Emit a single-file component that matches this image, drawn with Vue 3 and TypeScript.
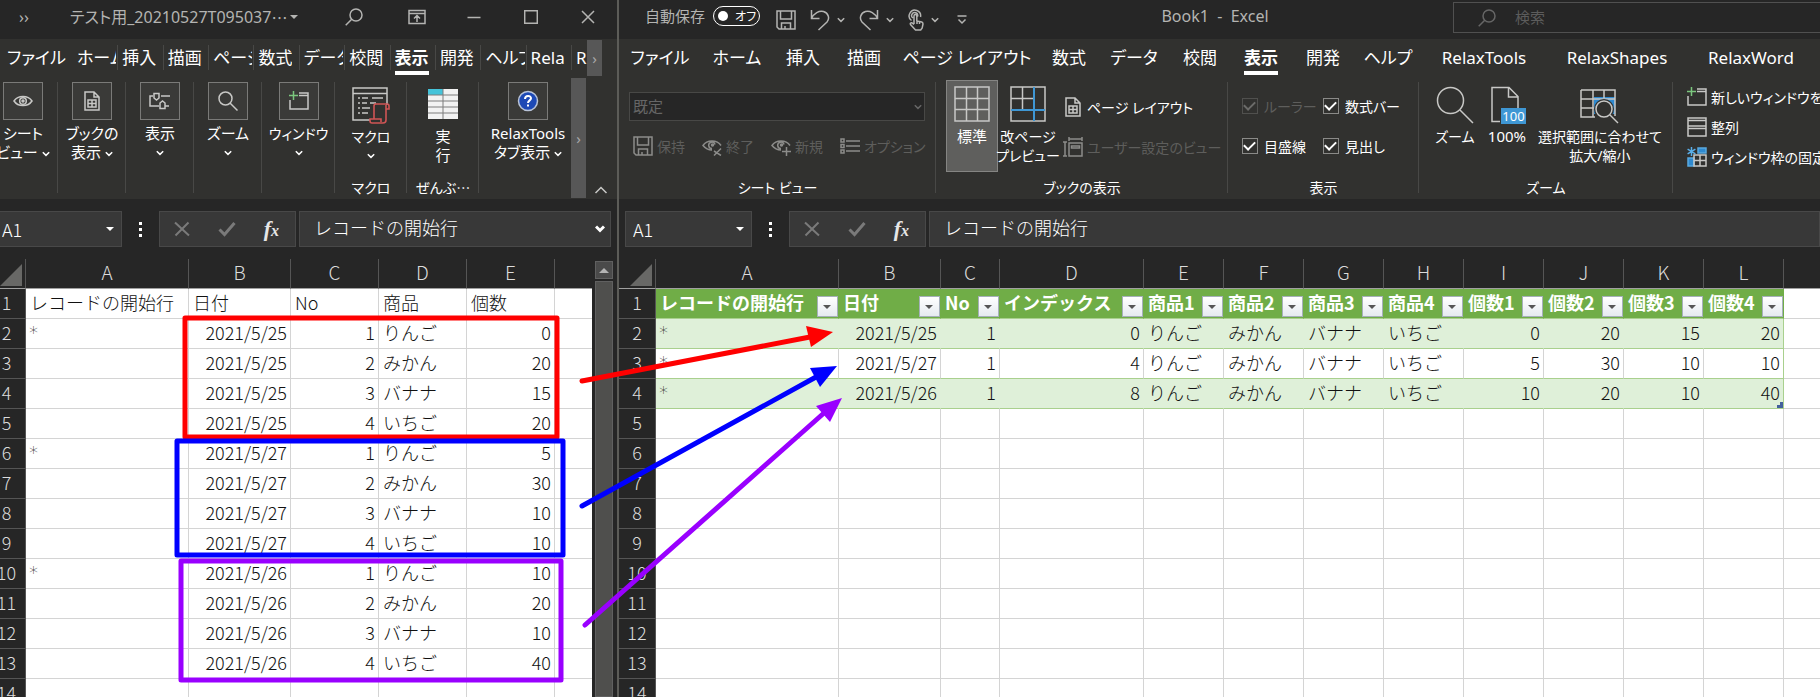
<script setup lang="ts">
interface Cell {
  text: string
  num?: boolean
}

const leftTabs: string[] = ['ホーム', '挿入', '描画', 'ページ', '数式', 'データ', '校閲', '表示', '開発', 'ヘルプ', 'Rela']
const rightTabs: string[] = ['ファイル', 'ホーム', '挿入', '描画', 'ページ レイアウト', '数式', 'データ', '校閲', '表示', '開発', 'ヘルプ', 'RelaxTools', 'RelaxShapes', 'RelaxWord']

const leftColumns = ['A', 'B', 'C', 'D', 'E', '']
const rightColumns = ['A', 'B', 'C', 'D', 'E', 'F', 'G', 'H', 'I', 'J', 'K', 'L', '']

const text = (value: string): Cell => ({ text: value })
const num = (value: string | number): Cell => ({ text: String(value), num: true })

const fruits = ['りんご', 'みかん', 'バナナ', 'いちご']
const records = [
  { date: '2021/5/25', counts: [0, 20, 15, 20] },
  { date: '2021/5/27', counts: [5, 30, 10, 10] },
  { date: '2021/5/26', counts: [10, 20, 10, 40] },
]

const leftRows: Cell[][] = [
  ['レコードの開始行', '日付', 'No', '商品', '個数', ''].map(text),
  ...records.flatMap((record) =>
    record.counts.map((count, i) => [
      text(i === 0 ? '*' : ''),
      num(record.date),
      num(i + 1),
      text(fruits[i]),
      num(count),
      text(''),
    ]),
  ),
  Array.from({ length: 6 }, () => text('')),
]

const tableHeads = ['レコードの開始行', '日付', 'No', 'インデックス', '商品1', '商品2', '商品3', '商品4', '個数1', '個数2', '個数3', '個数4']
const tableRows: Cell[][] = records.map((record, i) => [
  text('*'),
  num(record.date),
  num(1),
  num(i * 4),
  ...fruits.map(text),
  ...record.counts.map(num),
])
const emptyRows = [5, 6, 7, 8, 9, 10, 11, 12, 13, 14]
</script>

<template>
  <div class="desktop" lang="ja">
    <svg class="defs" aria-hidden="true">
      <symbol id="i-search" viewBox="0 0 18 18"><circle cx="11" cy="7" r="6" /><path d="M6.7 11.3 0.7 17.3" /></symbol>
      <symbol id="i-chev" viewBox="0 0 8 8"><path d="M.8 2.2 4 5.4 7.2 2.2" /></symbol>
      <symbol id="i-save" viewBox="0 0 20 20"><path d="M1 1h18v18H3l-2-2zM4.500 1v8h11V1M5.500 19v-6h9v6M9 19v-3" /></symbol>
      <symbol id="i-eye" viewBox="0 0 20 20"><path d="M1 10c4-6 14-6 18 0-4 6-14 6-18 0z" /><circle cx="10" cy="10" r="3.300" /><circle cx="10" cy="10" r="1" fill="currentColor" /></symbol>
      <symbol id="i-eyex" viewBox="0 0 20 20"><path d="M10 14C6 14 3 12 1 9.500c4-6 14-6 18 0M12 15l7 4.500M12 19.500l7-7M10 12.500a3.200 3.200 0 1 1 3-4" /><circle cx="10.500" cy="9" r="1" fill="currentColor" /></symbol>
      <symbol id="i-eyeplus" viewBox="0 0 20 20"><path d="M10 14C6 14 3 12 1 9.500c4-6 14-6 18 0M15.500 11v9M11 15.500h9M10 12.500a3.200 3.200 0 1 1 3-4" /><circle cx="10.500" cy="9" r="1" fill="currentColor" /></symbol>
      <symbol id="i-page" viewBox="0 0 16 20"><path d="M1 1h9l5 5v13H1zM10 1v5h5M4 9h8v7H4zM8 9v7M4 12.500h8" /></symbol>
      <symbol id="i-newwin" viewBox="0 0 20 20"><path d="M10 2h9v16H1V9M10 4.500h9" /><path d="M4.500 0v9M0 4.500h9" stroke="#7bc67e" /></symbol>
    </svg>

    <section class="window window-left">
      <header class="titlebar">
        <span class="more">››</span>
        <button class="doc-name">テスト用_20210527T095037<span class="cjk">…</span><i class="caret"></i></button>
        <span class="spacer"></span>
        <button class="winbtn winbtn-search" aria-label="検索"><svg width="18" height="18"><use href="#i-search" /></svg></button>
        <button class="winbtn" aria-label="リボンの表示オプション"><svg width="18" height="16" viewBox="0 0 18 16"><path d="M1 1.500h16v13H1zM1 4.500h16M9 13V6.500M6 9.500l3-3 3 3" /></svg></button>
        <button class="winbtn" aria-label="最小化"><svg width="14" height="14" viewBox="0 0 14 14"><path d="M.5 7.500h13" /></svg></button>
        <button class="winbtn" aria-label="最大化"><svg width="14" height="14" viewBox="0 0 14 14"><path d="M.7.7h12.600v12.600H.7z" /></svg></button>
        <button class="winbtn" aria-label="閉じる"><svg width="14" height="14" viewBox="0 0 14 14"><path d="M1 1l12 12M13 1 1 13" /></svg></button>
      </header>

      <nav class="tabs tabs-left">
        <button class="tab file"><span>ファイル</span></button>
        <button v-for="tab in leftTabs" :key="tab" class="tab slot" :class="{ active: tab === '表示' }"><span>{{ tab }}</span></button>
        <button class="tab tail"><span>R</span></button>
        <button class="scroll tabs-scroll" aria-label="次のタブ">›</button>
      </nav>

      <div class="ribbon ribbon-left">
        <div class="lgroup g-sheet">
          <button class="boxed"><span class="iconbox"><svg width="20" height="20"><use href="#i-eye" /></svg></span>シート<span class="nw">ビュー <svg class="chev"><use href="#i-chev" /></svg></span></button>
        </div>
        <div class="lgroup g-std">
          <button class="boxed"><span class="iconbox"><svg width="16" height="20"><use href="#i-page" /></svg></span>ブックの<span class="nw">表示 <svg class="chev"><use href="#i-chev" /></svg></span></button>
        </div>
        <div class="lgroup g-std">
          <button class="boxed"><span class="iconbox"><svg width="22" height="18" viewBox="0 0 22 18"><path d="M4 4H1v10h9M5 1.500h5V6L7.500 8 5 6zM12 4h9M16 14v2.500h-5V11l2.500-2 2.500 2v3h4" /></svg></span>表示<svg class="chev"><use href="#i-chev" /></svg></button>
        </div>
        <div class="lgroup g-std">
          <button class="boxed"><span class="iconbox"><svg width="20" height="20" viewBox="0 0 20 20"><circle cx="7.500" cy="7.500" r="6.500" /><path d="m12 12 7.500 7.500" /></svg></span>ズーム<svg class="chev"><use href="#i-chev" /></svg></button>
        </div>
        <div class="lgroup g-win">
          <button class="boxed compact"><span class="iconbox"><svg width="20" height="20"><use href="#i-newwin" /></svg></span>ウィンドウ<svg class="chev"><use href="#i-chev" /></svg></button>
        </div>
        <div class="lgroup g-macro">
          <button class="boxed tall compact">
            <svg width="38" height="38" viewBox="0 0 38 38"><path d="M18 33H1V1h34v17M1 6.500h34M6 11h2M10 11h6M20 11h11M6 16h2M10 16h5M18 16h6M6 21h2M10 21h8M6 26h2M10 26h6" /><path d="M22 17h13a2 2 0 0 1 2 2v3h-3M34 18v15a3 3 0 0 1-3 3H20a2 2 0 0 1-2-2v-2h11v3M22 32V19a2 2 0 0 1 2-2" stroke="#d05555" stroke-width="1.600" /></svg>
            マクロ<svg class="chev"><use href="#i-chev" /></svg>
          </button>
          <span class="caption">マクロ</span>
        </div>
        <div class="lgroup g-macro">
          <button class="boxed tall">
            <svg width="32" height="38" viewBox="0 0 32 38"><path d="M1 2h30v30H1z" fill="#f2f2f2" stroke="none" /><path d="M1 2h15v6H1z" fill="#45c3d9" stroke="none" /><path d="M16 2v30M1 8h30M1 14h30M1 20h30M1 26h30" stroke="#7d7d7d" stroke-width="1" /></svg>
            <span>実</span><span>行</span>
          </button>
          <span class="caption">ぜんぶ<span class="cjk">…</span></span>
        </div>
        <div class="lgroup g-relax">
          <button class="boxed"><span class="iconbox"><svg width="22" height="22" viewBox="0 0 22 22"><circle cx="11" cy="11" r="9.500" fill="#1d49b5" stroke="#b9c4d8" stroke-width="1.500" /><path d="M8 9c0-4 6-4 6-.7 0 2-3 2.200-3 4.700M11 14.500v2" stroke="#fff" stroke-width="2" /></svg></span>RelaxTools<span class="nw">タブ表示 <svg class="chev"><use href="#i-chev" /></svg></span></button>
        </div>
        <button class="scroll ribbon-scroll" aria-label="リボンを右へスクロール">›</button>
        <button class="collapse" aria-label="リボンを折りたたむ"><svg width="14" height="8" viewBox="0 0 14 8"><path d="M1.500 7 7 1.500 12.500 7" /></svg></button>
      </div>

      <div class="formula-row formula-row-left">
        <label class="namebox"><input value="A1" aria-label="名前ボックス" /><i class="caret"></i></label>
        <span class="dots"><i></i><i></i><i></i></span>
        <div class="fx-tools">
          <button aria-label="キャンセル"><svg width="16" height="16" viewBox="0 0 16 16"><path d="M1 1.500 15 14.500M14.500 1.500 1.500 14.500" stroke-width="2" /></svg></button>
          <button aria-label="入力"><svg width="18" height="16" viewBox="0 0 18 16"><path d="m1.500 8.500 5 5L16.500 2" stroke-width="3" /></svg></button>
          <button class="fx" aria-label="関数の挿入">f<sub>x</sub></button>
        </div>
        <label class="formula"><input value="レコードの開始行" aria-label="数式バー" /><svg class="expand" width="10" height="8" viewBox="0 0 10 8"><path d="m1 1.500 4 4 4-4" /></svg></label>
      </div>

      <div class="sheet-area">
        <div class="sheet">
          <table class="grid grid-left">
            <colgroup><col class="w-idx-l" /><col class="w163" /><col class="w102" /><col class="w88" /><col class="w88" /><col class="w88" /><col /></colgroup>
            <thead>
              <tr><th class="corner"><i></i></th><th v-for="(c, i) in leftColumns" :key="i">{{ c }}</th></tr>
            </thead>
            <tbody>
              <tr v-for="(row, r) in leftRows" :key="r">
                <th>{{ r + 1 }}</th>
                <td v-for="(cell, c) in row" :key="c" :class="{ num: cell.num, star: cell.text === '*' }">{{ cell.text }}</td>
              </tr>
            </tbody>
          </table>
        </div>
        <div class="vscroll">
          <button aria-label="上へスクロール"><i></i></button>
          <div class="thumb"></div>
        </div>
      </div>
    </section>

    <section class="window window-right">
      <header class="titlebar title-right">
        <label class="autosave">自動保存 <button class="toggle" role="switch" aria-checked="false"><i></i>オフ</button></label>
        <button class="qa qa-save" aria-label="上書き保存"><svg width="20" height="20"><use href="#i-save" /></svg></button>
        <button class="qa" aria-label="元に戻す"><svg width="20" height="22" viewBox="0 0 20 22"><path d="M1.500 1v8.500h8M1.500 9.500C4 4 9 1.500 13.500 2.500c5 1.500 6.500 7 3.500 10.500L8.500 21" /></svg><svg class="chev"><use href="#i-chev" /></svg></button>
        <button class="qa" aria-label="やり直し"><svg width="20" height="22" viewBox="0 0 20 22"><path d="M18.500 1v8.500h-8M18.500 9.500C16 4 11 1.500 6.500 2.500 1.500 4 0 9.500 3 13l8.500 8" /></svg><svg class="chev"><use href="#i-chev" /></svg></button>
        <button class="qa" aria-label="タッチ/マウス モード"><svg width="16" height="22" viewBox="0 0 16 22"><path d="M3.500 11.500A5.700 5.700 0 1 1 12.500 8M5 9a3 3 0 1 1 4.500-1.500M6 15V7a1.400 1.400 0 0 1 2.800 0v5l5 1c1 .3 1.200 1 1.200 2l-.8 4-1.500 2H7.500L2.500 15.500c-.7-1.300.6-2.200 1.700-1.500L6 15.500M9 12v3M11.500 12.500V15" /></svg><svg class="chev"><use href="#i-chev" /></svg></button>
        <button class="qa qa-menu" aria-label="クイック アクセス ツール バーのユーザー設定"><svg width="10" height="10" viewBox="0 0 10 10"><path d="M.5 1h9M1.500 4.500 5 8l3.500-3.500" /></svg></button>
        <h1 class="book-title">Book1&nbsp; -&nbsp; Excel</h1>
        <label class="search"><svg width="18" height="18"><use href="#i-search" /></svg><input placeholder="検索" aria-label="検索" /></label>
      </header>

      <nav class="tabs tabs-right">
        <button v-for="tab in rightTabs" :key="tab" class="tab" :class="{ active: tab === '表示' }"><span>{{ tab }}</span></button>
      </nav>

      <div class="ribbon ribbon-right">
        <div class="rgroup g-view">
          <div class="body sheetview">
            <select disabled aria-label="シート ビュー"><option>既定</option></select>
            <svg class="chev select-chev"><use href="#i-chev" /></svg>
            <div class="viewtools">
              <button disabled><svg width="20" height="20"><use href="#i-save" /></svg>保持</button>
              <button disabled><svg width="20" height="20"><use href="#i-eyex" /></svg>終了</button>
              <button disabled><svg width="20" height="20"><use href="#i-eyeplus" /></svg>新規</button>
              <button disabled><svg width="20" height="20" viewBox="0 0 20 20"><path d="M6 5h14M6 10h14M6 15h14" /><path d="M1 3h3v3H1zM1 8.500h3v3H1zM1 14h3v3H1z" /></svg>オプション</button>
            </div>
          </div>
          <span class="caption">シート ビュー</span>
        </div>

        <div class="rgroup g-book">
          <div class="body bookview">
            <button class="large selected"><svg width="36" height="36" viewBox="0 0 36 36"><path d="M1 1h34v34H1zM12.500 1v34M23.500 1v34M1 12.500h34M1 23.500h34" /></svg>標準</button>
            <button class="large compact"><svg width="36" height="36" viewBox="0 0 36 36"><path d="M1 1h34v34H1zM12.500 1v22M1 12.500h22" /><path d="M24 1v34M1 24h34" stroke="#3f97d4" stroke-width="2" /></svg><span class="nw">改ページ</span><span class="nw">プレビュー</span></button>
            <div class="pair">
              <button class="small"><svg width="16" height="20"><use href="#i-page" /></svg>ページ レイアウト</button>
              <button class="small" disabled><svg width="20" height="20" viewBox="0 0 20 20"><path d="M6 2h13M6 0v4M19 0v4M2 5v14M0 5h4M0 19h4M6 6h13v13H6zM8.500 9h8v2h-8z" /></svg>ユーザー設定のビュー</button>
            </div>
          </div>
          <span class="caption">ブックの表示</span>
        </div>

        <div class="rgroup g-show">
          <div class="body checks">
            <label class="off"><input type="checkbox" checked disabled />ルーラー</label>
            <label><input type="checkbox" checked />数式バー</label>
            <label><input type="checkbox" checked />目盛線</label>
            <label><input type="checkbox" checked />見出し</label>
          </div>
          <span class="caption">表示</span>
        </div>

        <div class="rgroup g-zoom">
          <div class="body zoomview">
            <button class="large compact"><svg width="38" height="38" viewBox="0 0 38 38"><circle cx="14.500" cy="14.500" r="13" /><path d="m24 24 13 13" /></svg><span class="nw">ズーム</span></button>
            <button class="large"><svg width="38" height="38" viewBox="0 0 38 38"><path d="M12 35.500H4V1.500h17l9 9V22M20.500 1.500V11H30" /><path d="M13 22h25v16H13z" fill="#3f97d4" stroke="none" /><text x="25.500" y="35">100</text></svg><span class="nw">100%</span></button>
            <button class="large compact"><svg width="40" height="38" viewBox="0 0 40 38"><path d="M14 11h21v17H14z" fill="#2f8ad0" stroke="none" /><path d="M1 4h34v26M1 4v27h14M1 13h34M1 22h13M13 4v27M24 4v8" /><circle cx="24" cy="23" r="10" fill="#31312f" stroke="none" /><circle cx="24" cy="23" r="8" /><path d="m30 29 8 8" /></svg><span class="nw">選択範囲に合わせて</span><span class="nw">拡大/縮小</span></button>
          </div>
          <span class="caption">ズーム</span>
        </div>

        <div class="rgroup g-window">
          <div class="body winview">
            <button class="small"><svg width="20" height="20"><use href="#i-newwin" /></svg>新しいウィンドウを開く</button>
            <button class="small"><svg width="20" height="20" viewBox="0 0 20 20"><path d="M1 1h18v18H1zM1 3.500h18M1 9h18M1 11.500h18" /></svg>整列</button>
            <button class="small"><svg width="20" height="20" viewBox="0 0 20 20"><path d="M11 1h8v5h-8zM1 11h6v8H1z" fill="#2f8ad0" stroke="#5aa9e0" /><path d="M7 8h12v11H7zM7 13.500h12M13 8v11" /><path d="M4.500 0v9M.6 2.200l7.800 4.600M8.400 2.200.6 6.800" stroke="#5ab0ea" /></svg>ウィンドウ枠の固定</button>
          </div>
        </div>
      </div>

      <div class="formula-row formula-row-right">
        <label class="namebox"><input value="A1" aria-label="名前ボックス" /><i class="caret"></i></label>
        <span class="dots"><i></i><i></i><i></i></span>
        <div class="fx-tools">
          <button aria-label="キャンセル"><svg width="16" height="16" viewBox="0 0 16 16"><path d="M1 1.500 15 14.500M14.500 1.500 1.500 14.500" stroke-width="2" /></svg></button>
          <button aria-label="入力"><svg width="18" height="16" viewBox="0 0 18 16"><path d="m1.500 8.500 5 5L16.500 2" stroke-width="3" /></svg></button>
          <button class="fx" aria-label="関数の挿入">f<sub>x</sub></button>
        </div>
        <label class="formula"><input value="レコードの開始行" aria-label="数式バー" /></label>
      </div>

      <div class="sheet-area">
        <div class="sheet">
          <table class="grid grid-right">
            <colgroup>
              <col class="w-idx-r" /><col class="w183" /><col class="w102" /><col class="w59" /><col class="w144" />
              <col v-for="n in 8" :key="n" class="w80" /><col />
            </colgroup>
            <thead>
              <tr><th class="corner"><i></i></th><th v-for="(c, i) in rightColumns" :key="i">{{ c }}</th></tr>
            </thead>
            <tbody>
              <tr class="heads">
                <th>1</th>
                <td v-for="head in tableHeads" :key="head"><div class="head"><span>{{ head }}</span><button :aria-label="head + 'のフィルター'"><i></i></button></div></td>
                <td></td>
              </tr>
              <tr v-for="(row, r) in tableRows" :key="r" class="data" :class="{ band: r % 2 === 0 }">
                <th>{{ r + 2 }}</th>
                <td v-for="(cell, c) in row" :key="c" :class="{ num: cell.num, star: cell.text === '*', last: r === 2 && c === 11 }">{{ cell.text }}</td>
                <td></td>
              </tr>
              <tr v-for="n in emptyRows" :key="n">
                <th>{{ n }}</th>
                <td v-for="c in 13" :key="c"></td>
              </tr>
            </tbody>
          </table>
        </div>
      </div>
    </section>

    <svg class="notes" aria-hidden="true">
      <g fill="none" stroke-width="5" stroke-linejoin="round" stroke-linecap="round">
        <path d="M185 318h372v119H185z M582 381 810 337" stroke="#f00" />
        <path d="M177 441h386v114H177z M582 506 816 377" stroke="#00f" />
        <path d="M181 561h380v119H181z M585 625 824 413" stroke="#90f" />
      </g>
      <path d="m833 332-27-6 5 21z" fill="#f00" />
      <path d="m837 366-27 2 10 19z" fill="#00f" />
      <path d="m842 398-26 8 14 16z" fill="#90f" />
    </svg>
  </div>
</template>

<style>
html,
body {
  margin: 0;
  background: #262626;
}
</style>

<style scoped>
* {
  box-sizing: border-box;
}
.desktop {
  position: relative;
  display: flex;
  height: 100vh;
  overflow: hidden;
  background: #262626;
  color: #fff;
  font-family: "Noto Sans", "Noto Sans CJK JP", sans-serif;
  font-size: 15px;
  line-height: 19px;
  font-feature-settings: "palt";
}
.defs {
  position: absolute;
  width: 0;
  height: 0;
}
svg {
  flex: none;
  fill: none;
  stroke: currentColor;
  stroke-width: 1.5;
}
button,
input,
select {
  margin: 0;
  padding: 0;
  border: 0;
  border-radius: 0;
  background: none;
  color: inherit;
  font: inherit;
  font-feature-settings: inherit;
  white-space: nowrap;
}
.cjk {
  font-family: "Noto Sans CJK JP", sans-serif;
  font-feature-settings: normal;
}
.nw {
  white-space: nowrap;
}
.spacer {
  flex: 1;
}
.chev {
  width: 8px;
  height: 8px;
}
.caret {
  border: 4px solid transparent;
  border-top-color: currentColor;
  border-bottom: 0;
}
.window {
  display: flex;
  flex-direction: column;
  min-width: 0;
  overflow: hidden;
}
.window-left {
  flex: 0 0 34.01%;
  border-right: 2px solid #5c5c58;
}
.window-right {
  flex: 1;
}

/* title bars */
.titlebar {
  display: flex;
  flex: none;
  align-items: center;
  height: 39px;
  padding-bottom: 5px;
  color: #b4b4b2;
  font-size: 16px;
}
.more {
  width: 70px;
  padding-left: 19px;
}
.doc-name {
  display: flex;
  align-items: center;
}
.doc-name .caret {
  margin-left: 3px;
}
.winbtn {
  display: flex;
  justify-content: center;
  width: 57px;
}
.winbtn-search {
  width: 70px;
}
.title-right {
  align-items: stretch;
  padding: 0 0 0 26px;
}
.autosave {
  display: flex;
  align-items: center;
  gap: 8px;
  padding-bottom: 7px;
  font-size: 15px;
}
.toggle {
  display: flex;
  align-items: center;
  gap: 7px;
  width: 47px;
  height: 20px;
  padding-left: 4px;
  border: 1px solid #fff;
  border-radius: 10px;
  color: #fff;
  font-size: 12px;
}
.toggle i {
  width: 10px;
  height: 10px;
  border-radius: 5px;
  background: #fff;
}
.qa {
  display: flex;
  align-items: center;
  gap: 7px;
  margin-left: 14px;
}
.qa-save {
  margin-left: 16px;
}
.qa-menu {
  margin-left: 18px;
}
.book-title {
  flex: 1;
  margin: 0;
  padding: 7px 0 0 10px;
  font-size: 16px;
  font-weight: 400;
  text-align: center;
}
.search {
  display: flex;
  flex: 0 1 367px;
  align-items: center;
  gap: 19px;
  height: 31px;
  margin-top: 2px;
  padding-left: 24px;
  border: 1px solid #505050;
  border-right: 0;
  color: #666;
  font-size: 15px;
}
.search input {
  flex: 1;
  min-width: 0;
}
.search input::placeholder {
  color: #5c5c5c;
}

/* ribbon tabs */
.tabs {
  display: flex;
  flex: none;
  height: 39px;
  background: #31312f;
  font-size: 17px;
}
.tab {
  display: flex;
  flex: none;
  align-items: center;
  justify-content: center;
  height: 36px;
}
.tab span {
  line-height: 26px;
  border-bottom: 4px solid transparent;
  padding-top: 6px;
}
.tab.active span {
  border-bottom-color: #fff;
  font-weight: 700;
}
.tabs-left .file {
  width: 73px;
  justify-content: flex-start;
  padding-left: 7px;
}
.tabs-left .slot {
  flex: 1 1 0;
  justify-content: flex-start;
  min-width: 0;
  padding: 0 2px 0 4px;
  background: linear-gradient(#484846, #484846) right 6px / 1px 25px no-repeat;
}
.tabs-left .slot span {
  overflow: hidden;
}
.tabs-left .tail {
  width: 15px;
  justify-content: flex-start;
  padding-left: 4px;
  overflow: hidden;
}
.scroll {
  flex: none;
  width: 15px;
  background: #575757;
  color: #a8a8a8;
  font-size: 15px;
}
.tabs-scroll {
  height: 36px;
  margin: 1px 15px 0 0;
}
.tabs-right .tab:nth-child(1) { width: 82px; }
.tabs-right .tab:nth-child(2) { width: 72px; }
.tabs-right .tab:nth-child(3) { width: 60px; }
.tabs-right .tab:nth-child(4) { width: 62px; }
.tabs-right .tab:nth-child(5) { width: 144px; }
.tabs-right .tab:nth-child(6) { width: 60px; }
.tabs-right .tab:nth-child(7) { width: 70px; }
.tabs-right .tab:nth-child(8) { width: 62px; }
.tabs-right .tab:nth-child(9) { width: 60px; }
.tabs-right .tab:nth-child(10) { width: 64px; }
.tabs-right .tab:nth-child(11) { width: 66px; }
.tabs-right .tab:nth-child(12) { width: 126px; }
.tabs-right .tab:nth-child(13) { width: 140px; }
.tabs-right .tab:nth-child(14) { width: 128px; }

/* ribbon body */
.ribbon {
  display: flex;
  flex: none;
  height: 121px;
  background: #31312f;
}
.ribbon svg {
  color: #c8c8c6;
}
.ribbon .chev {
  color: #fff;
}
.ribbon .compact {
  font-size: 14px;
}
.lgroup,
.rgroup {
  display: flex;
  flex: none;
  flex-direction: column;
  align-items: center;
  background: linear-gradient(#484846, #484846) right 4px / 1px 111px no-repeat;
}
.g-sheet { width: 58px; padding-right: 12px; }
.g-std { width: 68px; }
.g-win { width: 73px; }
.g-macro { width: 72px; }
.g-relax { width: 92px; padding-left: 6px; background: none; }
.boxed {
  display: flex;
  flex: 1;
  flex-direction: column;
  align-items: center;
  padding-top: 4px;
}
.boxed > .chev {
  margin-top: 6px;
}
.boxed.tall {
  padding-top: 9px;
}
.boxed.tall > svg:first-child {
  margin-bottom: 2px;
}
.iconbox {
  display: flex;
  align-items: center;
  justify-content: center;
  width: 40px;
  height: 38px;
  margin-bottom: 4px;
  border: 1px solid #7a7a78;
  background: #3a3a38;
}
.caption {
  height: 21px;
  font-size: 14px;
  text-align: center;
}
.ribbon-scroll {
  height: 120px;
}
.collapse {
  display: flex;
  flex: 1;
  align-items: flex-end;
  justify-content: center;
  padding-bottom: 5px;
}
.body {
  flex: 1;
  width: 100%;
  min-height: 0;
}
.g-view { width: 317px; }
.g-book { width: 292px; }
.g-show { width: 191px; }
.g-zoom { width: 254px; }
.g-window { flex: 1; min-width: 0; overflow: hidden; background: none; }
.sheetview {
  position: relative;
  padding: 14px 11px 0 10px;
}
.sheetview select {
  width: 100%;
  height: 29px;
  padding-left: 3px;
  border: 1px solid #484846;
  background: #262626;
  color: #666;
  appearance: none;
  opacity: 1;
}
.ribbon .select-chev {
  position: absolute;
  top: 25px;
  right: 14px;
  color: #666;
}
.viewtools {
  display: flex;
  gap: 17px;
  padding: 15px 0 0 4px;
  font-size: 14px;
}
.viewtools button {
  display: flex;
  align-items: center;
  gap: 4px;
}
button:disabled {
  color: #5e5e5c;
}
.ribbon button:disabled svg {
  color: #8c8c8a;
}
.large {
  display: flex;
  flex: none;
  flex-direction: column;
  align-items: center;
  width: 52px;
  height: 92px;
  padding-top: 6px;
  border: 0;
}
.large svg {
  margin-bottom: 5px;
}
.bookview {
  display: flex;
  gap: 2px;
  padding: 2px 0 0 10px;
}
.bookview .large:nth-child(2) {
  width: 56px;
}
.large.selected {
  background: #5f5f5d;
  box-shadow: inset 0 0 0 1px #858583;
}
.pair {
  display: flex;
  flex-direction: column;
  gap: 20px;
  padding: 17px 0 0 5px;
}
.small {
  display: flex;
  align-items: center;
  gap: 4px;
  height: 20px;
  font-size: 14px;
}
.pair .small:first-child {
  gap: 6px;
  padding-left: 2px;
}
.checks {
  display: grid;
  grid-template-columns: 81px 1fr;
  grid-auto-rows: 40px;
  padding: 8px 0 0 14px;
  font-size: 14px;
}
.checks label {
  display: flex;
  align-items: center;
  gap: 6px;
  white-space: nowrap;
}
.checks .off {
  color: #5e5e5c;
}
.checks input {
  flex: none;
  display: grid;
  place-items: center;
  width: 16px;
  height: 16px;
  border: 1px solid #8a8a88;
  appearance: none;
}
.checks input::before {
  content: "";
  width: 9px;
  height: 5px;
  margin-bottom: 3px;
  border: 2px solid #fff;
  border-top: 0;
  border-right: 0;
  rotate: -45deg;
}
.checks input:disabled {
  border-color: #50504e;
}
.checks input:disabled::before {
  border-color: #6c6c6a;
}
.zoomview {
  display: flex;
  padding: 2px 0 0 10px;
}
.zoomview .large svg {
  margin-bottom: 3px;
}
.zoomview .large:nth-child(3) {
  width: 134px;
}
.zoomview text {
  fill: #fff;
  stroke: none;
  font-size: 13px;
  text-anchor: middle;
}
.winview {
  display: flex;
  flex-direction: column;
  gap: 10px;
  padding: 9px 0 0 14px;
}

/* formula bar */
.formula-row {
  display: flex;
  flex: none;
  height: 60px;
  padding: 12px 0;
  font-family: "Noto Sans CJK JP", sans-serif;
  font-feature-settings: normal;
  font-size: 18px;
  font-weight: 300;
}
.formula-row-left {
  padding-right: 6px;
}
.formula-row-right {
  padding-left: 6px;
}
.namebox,
.fx-tools,
.formula {
  display: flex;
  align-items: center;
  border: 1px solid #484848;
  background: #383838;
}
.namebox {
  width: 127px;
  padding: 0 7px;
}
.formula-row-left .namebox {
  width: 122px;
  padding-left: 2px;
  border-left: 0;
}
.namebox input,
.formula input {
  flex: 1;
  min-width: 0;
}
.dots {
  display: flex;
  flex-direction: column;
  align-items: center;
  justify-content: center;
  gap: 3px;
  width: 37px;
}
.dots i {
  width: 3px;
  height: 3px;
  background: #fff;
}
.fx-tools {
  justify-content: space-between;
  width: 137px;
  padding: 0 16px 0 14px;
  margin-right: 3px;
  color: #7a7a7a;
}
.fx-tools button {
  display: flex;
}
.fx-tools .fx {
  display: block;
  color: #e6e6e6;
  font: italic 700 22px/24px "Liberation Serif", serif;
}
.fx sub {
  font-size: 16px;
  line-height: 16px;
  vertical-align: baseline;
}
.formula {
  flex: 1;
  min-width: 0;
  padding: 0 5px 0 14px;
}
.formula input {
  padding-bottom: 4px;
}
.expand {
  stroke-width: 3;
}

/* sheets */
.sheet-area {
  display: flex;
  flex: 1;
  min-height: 0;
}
.sheet {
  flex: 1;
  min-width: 0;
  overflow: hidden;
}
.grid {
  table-layout: fixed;
  border-collapse: separate;
  border-spacing: 0;
  width: 100%;
  background: #fff;
  color: #111;
  font-family: "Noto Sans CJK JP", sans-serif;
  font-feature-settings: normal;
  font-size: 18px;
  font-weight: 300;
  line-height: 27px;
}
.grid-left {
  width: calc(100% + 12px);
  margin-left: -12px;
}
.w-idx-l { width: 38px; }
.w-idx-r { width: 37px; }
.w59 { width: 59px; }
.w80 { width: 80px; }
.w88 { width: 88px; }
.w102 { width: 102px; }
.w144 { width: 144px; }
.w163 { width: 163px; }
.w183 { width: 183px; }
.grid th {
  padding: 0 0 2px;
  border-right: 1px solid #555;
  border-bottom: 1px solid #555;
  background: #262626;
  color: #dcdcdc;
  font-weight: 300;
  text-align: center;
}
.grid thead th {
  height: 30px;
  padding-bottom: 4px;
  border-bottom-color: #a0a0a0;
  font-size: 19px;
  line-height: 25px;
}
.grid thead th:last-child {
  border-right: 0;
}
.grid thead .corner {
  padding: 0;
  text-align: right;
  line-height: 0;
}
.corner i {
  display: inline-block;
  border-bottom: 22px solid #686866;
  border-left: 22px solid transparent;
  margin: 2px 3px 0 0;
}
.grid td {
  height: 30px;
  padding: 0 3px 2px 4px;
  border-right: 1px solid #d4d4d4;
  border-bottom: 1px solid #d4d4d4;
  white-space: nowrap;
}
.grid td:last-child {
  border-right: 0;
}
.grid .num {
  text-align: right;
}
.grid .star {
  padding-left: 3px;
  font-family: "DejaVu Sans", sans-serif;
}
.grid-right .heads td:not(:last-child) {
  padding: 0 0 0 4px;
  border-color: #70ad47;
  border-bottom-color: #a9d08e;
  background: #70ad47;
  color: #fff;
  font-weight: 700;
}
.head {
  display: flex;
  align-items: flex-end;
  justify-content: space-between;
  height: 29px;
}
.head span {
  min-width: 0;
  padding-bottom: 2px;
}
.head button {
  display: flex;
  flex: none;
  align-items: center;
  justify-content: center;
  width: 21px;
  height: 21px;
  margin-bottom: 1px;
  border: 1px solid #a6b0ba;
  background: linear-gradient(#fff, #e6ebf0);
}
.head i,
.vscroll i {
  border: 4px solid transparent;
  border-top-color: #555;
  border-bottom: 0;
}
.data td:not(:last-child) {
  border-bottom-color: #a9d08e;
}
.band td:not(:last-child) {
  border-right-color: #dff0d9;
  background: #dff0d9;
}
.grid .data td:nth-last-child(2) {
  border-right-color: #a9d08e;
}
.grid .data td.last {
  background: linear-gradient(#44619d, #44619d) right bottom / 6px 3px no-repeat, linear-gradient(#44619d, #44619d) right bottom / 3px 6px no-repeat, #dff0d9;
}
.vscroll {
  display: flex;
  flex: none;
  flex-direction: column;
  gap: 2px;
  width: 25px;
  padding: 2px 4px 0 3px;
}
.vscroll button {
  display: flex;
  align-items: center;
  justify-content: center;
  height: 18px;
  border: 1px solid #606060;
  background: #4a4a4a;
}
.vscroll i {
  border: 5px solid transparent;
  border-top: 0;
  border-bottom-color: #b4b4b4;
}
.thumb {
  flex: 1;
  border: 1px solid #606060;
  background: #4f4f4d;
}

/* callouts drawn over both windows */
.notes {
  position: absolute;
  inset: 0;
  width: 100%;
  height: 100%;
  stroke: none;
  pointer-events: none;
}
</style>
